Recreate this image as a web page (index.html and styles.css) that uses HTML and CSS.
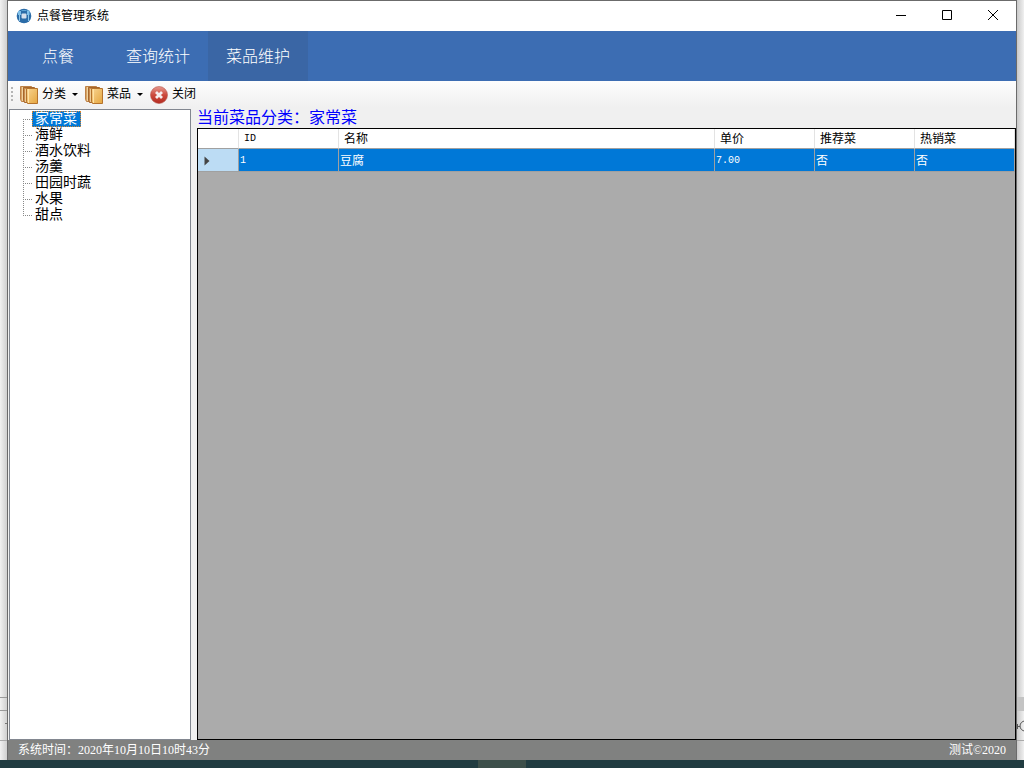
FILE: index.html
```html
<!DOCTYPE html>
<html lang="zh-CN">
<head>
<meta charset="utf-8">
<title>点餐管理系统</title>
<link rel="stylesheet" href="styles.css">
</head>
<body>
<div class="desktop">
  <div class="behind behind-left"><div class="behind-strip"></div><div class="behind-foot"><svg width="7" height="30" viewBox="0 0 7 30"><path d="M5 12.500h2" stroke="#777" fill="none"/></svg></div></div>
  <div class="window">
    <header class="titlebar">
      <svg class="app-icon" width="16" height="16" viewBox="0 0 16 16"><circle cx="8" cy="8" r="7.300" fill="#2b6ca8"/><path d="M2 3h3v4H2zM11 2.500h2.500v4.500H11z" fill="#7fc0ea"/><path d="M3.500 7v6M12.500 7v6" stroke="#8cc4e8"/><path d="M5.500 2.500h5" stroke="#5ba2d3"/><rect x="5.500" y="5.500" width="5" height="5" rx="1" fill="#d5dfec"/></svg>
      <h1 class="app-title">点餐管理系统</h1>
      <div class="window-buttons">
        <button class="win-btn" aria-label="最小化"><svg width="12" height="12" viewBox="0 0 12 12"><path d="M1 5.500h10" stroke="#000"/></svg></button>
        <button class="win-btn" aria-label="最大化"><svg width="12" height="12" viewBox="0 0 12 12"><path d="M1.500 .5h9v9h-9z" stroke="#000" fill="none"/></svg></button>
        <button class="win-btn" aria-label="关闭窗口"><svg width="12" height="12" viewBox="0 0 12 12"><path d="M1 0l10 10M11 0L1 10" stroke="#000"/></svg></button>
      </div>
    </header>
    <nav class="menu">
      <button class="menu-item">点餐</button>
      <button class="menu-item">查询统计</button>
      <button class="menu-item active">菜品维护</button>
    </nav>
    <div class="toolbar">
      <span class="grip"></span>
      <button class="tool">
        <svg width="18" height="20" viewBox="0 0 18 20"><defs><linearGradient id="book" x1="0" y1="0" x2="1" y2="1"><stop offset="0" stop-color="#f8d491"/><stop offset="1" stop-color="#e5a63f"/></linearGradient></defs><path d="M.5 1.500h11v15h-10l-1-2z" fill="#d9a566" stroke="#bd8146"/><path d="M2.500 2v14" stroke="#f0d3a0"/><path d="M3.500 2.500h11v15h-10l-1-2z" fill="#c98d4e" stroke="#a5662d"/><path d="M5.500 4v13" stroke="#edcc96"/><path d="M6.500 3.500h11v15h-10l-1-2z" fill="url(#book)" stroke="#b5732c"/><path d="M8.500 4v14" stroke="#ffe2a5"/></svg>
        <span>分类</span><span class="caret"></span>
      </button>
      <button class="tool">
        <svg width="18" height="20" viewBox="0 0 18 20"><path d="M.5 1.500h11v15h-10l-1-2z" fill="#d9a566" stroke="#bd8146"/><path d="M2.500 2v14" stroke="#f0d3a0"/><path d="M3.500 2.500h11v15h-10l-1-2z" fill="#c98d4e" stroke="#a5662d"/><path d="M5.500 4v13" stroke="#edcc96"/><path d="M6.500 3.500h11v15h-10l-1-2z" fill="url(#book)" stroke="#b5732c"/><path d="M8.500 4v14" stroke="#ffe2a5"/></svg>
        <span>菜品</span><span class="caret"></span>
      </button>
      <button class="tool">
        <svg width="18" height="20" viewBox="0 0 18 20"><defs><linearGradient id="stop" x1="0" y1="0" x2="0" y2="1"><stop offset="0" stop-color="#e69a90"/><stop offset=".5" stop-color="#cc4a3d"/><stop offset="1" stop-color="#b42c20"/></linearGradient></defs><circle cx="9" cy="10" r="8.500" fill="url(#stop)" stroke="#b5584e" stroke-width=".6"/><path d="M6 7l6 6M12 7l-6 6" stroke="#f6eeee" stroke-width="2.800"/></svg>
        <span>关闭</span>
      </button>
    </div>
    <main class="content">
      <ul class="tree">
        <li><span class="node selected">家常菜</span></li>
        <li><span class="node">海鲜</span></li>
        <li><span class="node">酒水饮料</span></li>
        <li><span class="node">汤羹</span></li>
        <li><span class="node">田园时蔬</span></li>
        <li><span class="node">水果</span></li>
        <li><span class="node">甜点</span></li>
      </ul>
      <section class="detail">
        <h2 class="caption">当前菜品分类：家常菜</h2>
        <div class="grid">
          <table class="dishes">
            <colgroup><col class="col-head"><col class="col-field"><col><col class="col-field"><col class="col-field"><col class="col-field"></colgroup>
            <thead><tr><th aria-label="行"></th><th class="latin">ID</th><th>名称</th><th>单价</th><th>推荐菜</th><th>热销菜</th></tr></thead>
            <tbody><tr><td class="row-head"><svg width="6" height="10" viewBox="0 0 6 10"><path d="M.5 .5v9L5.500 5z" fill="#444"/></svg></td><td class="latin">1</td><td>豆腐</td><td class="latin">7.00</td><td>否</td><td>否</td></tr></tbody>
          </table>
        </div>
      </section>
    </main>
    <footer class="status"><span>系统时间：2020年10月10日10时43分</span><span>测试©2020</span></footer>
  </div>
  <div class="behind behind-right"><div class="behind-strip"></div><div class="behind-foot"><svg width="7" height="30" viewBox="0 0 7 30"><path d="M0 15.500h3M0.500 13v5" stroke="#555" fill="none"/><circle cx="8" cy="15" r="5" stroke="#555" fill="none"/></svg></div></div>
</div>
<div class="taskbar"><div class="task"></div></div>
</body>
</html>
```
FILE: styles.css
```css
* { box-sizing: border-box; }
body {
  margin: 0;
  min-height: 100vh;
  display: flex;
  flex-direction: column;
  font: 12px/16px "Liberation Serif", "Noto Sans CJK SC", sans-serif;
  color: #000;
}
button { border: 0; padding: 0; background: none; font: inherit; color: inherit; }
svg { display: block; flex: none; }
h1, h2 { margin: 0; font-weight: 400; }

.desktop { flex: 1; display: grid; grid-template-columns: 7px minmax(0, 1fr) 7px; }
.behind { display: flex; flex-direction: column; justify-content: flex-end; overflow: hidden; padding-bottom: 19px; }
.behind-left { background: linear-gradient(90deg, #f1f1f1, #cfcfcf); }
.behind-right { background: linear-gradient(90deg, #c9c9c9, #f0f0f0); }
.behind-strip { height: 14px; border-top: 1px solid #999; border-bottom: 1px solid #999; }
.behind-right .behind-strip { background: #c4c4c4; border: 0; }
.behind-foot { height: 30px; border-bottom: 1px solid #aaa; }

.window {
  display: flex;
  flex-direction: column;
  border: 1px solid #6b6b6b;
  border-bottom: 0;
  background: #f0f0f0;
}
.titlebar { display: flex; align-items: center; height: 30px; padding-left: 8px; background: #fff; }
.app-title { margin-left: 5px; font-size: 12px; }
.window-buttons { display: flex; margin-left: auto; }
.win-btn { display: grid; place-items: center; width: 46px; height: 30px; }

.menu { display: flex; height: 50px; background: #3c6db3; color: #fff; }
.menu-item { width: 100px; padding-top: 2px; font-size: 16px; font-weight: 300; }
.menu-item.active { background: #3a66a5; }

.toolbar { display: flex; align-items: center; height: 27px; padding-left: 3px; background: linear-gradient(#fdfdfd, #f0f0f0); }
.grip { width: 2px; height: 16px; margin-right: 7px; background: repeating-linear-gradient(#b5b5b5 0 2px, transparent 2px 4px); }
.tool { display: flex; align-items: center; gap: 4px; margin-right: 7px; }
.tool span { margin-top: -2px; }
.tool .caret { margin: 0 0 0 2px; border: 3px solid transparent; border-top-color: #000; border-bottom: 0; }

.content { flex: 1; display: grid; grid-template-columns: 182px minmax(0, 1fr); gap: 6px; padding-left: 1px; }
.tree { margin: 1px 0 0; padding: 1px 0 0 13px; list-style: none; border: 1px solid #828790; background: #fff; font-size: 14px; }
.tree li {
  display: flex;
  height: 16px;
  background:
    repeating-linear-gradient(90deg, #888 0 1px, transparent 1px 2px) 0 8px / 9px 1px no-repeat,
    repeating-linear-gradient(#888 0 1px, transparent 1px 2px) 0 0 / 1px 100% no-repeat;
}
.tree li:first-child { background-position: 0 8px, 0 8px; }
.tree li:last-child { background-size: 9px 1px, 1px 8px; }
.node { margin-left: 9px; padding: 0 3px; line-height: 16px; }
.node.selected { padding-right: 4px; background: #0078d7; color: #fff; outline: 1px dotted #d48534; outline-offset: -1px; }

.detail { display: flex; flex-direction: column; }
.caption { height: 20px; color: #00f; font-size: 16px; line-height: 20px; }
.grid { flex: 1; border: 1px solid #000; background: #ababab; }
.dishes { width: 100%; table-layout: fixed; border-collapse: separate; border-spacing: 0; line-height: 16px; }
.col-head { width: 41px; }
.col-field { width: 100px; }
.dishes th { height: 20px; padding: 1px 5px 0; border-right: 1px solid #e3e3e3; border-bottom: 1px solid #a0a0a0; background: #fff; font-weight: 400; text-align: left; }
.dishes td { height: 23px; padding: 1px 1px 0; border-right: 1px solid #a0a0a0; border-bottom: 1px solid #a0a0a0; background: #0078d7; color: #fff; }
.dishes .row-head { padding-left: 6px; background: #bcdcf4; }
.dishes .latin { font-family: "Liberation Mono", monospace; font-size: 10px; }

.status { display: flex; align-items: center; justify-content: space-between; height: 20px; padding: 0 10px; background: #808180; color: #fff; }
.taskbar { height: 8px; padding-right: 20px; background: #213c41; }
.task { width: 48px; height: 8px; margin: 0 auto; background: #3d4f4a; }
```
